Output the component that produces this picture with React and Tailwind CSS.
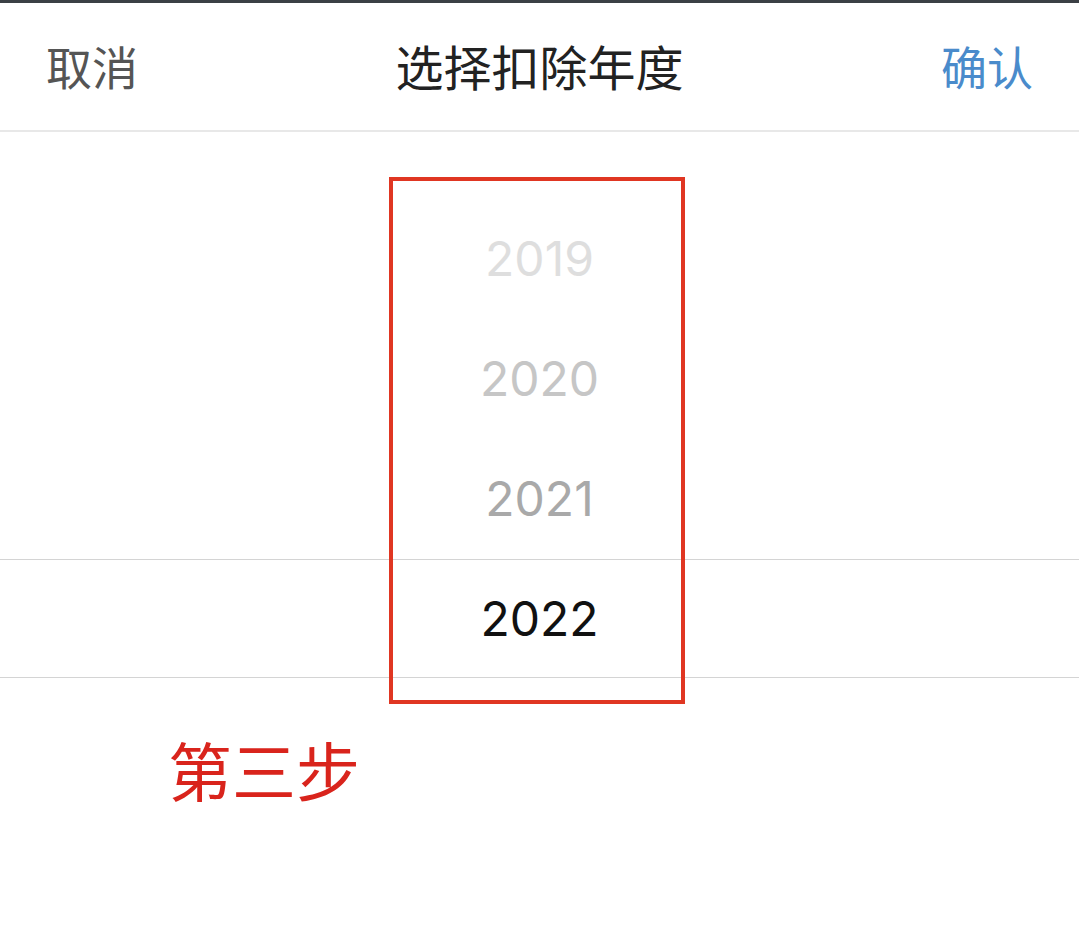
import React from 'react';

const years = [
  { label: '2019', color: 'text-[#dedede]' },
  { label: '2020', color: 'text-[#c6c6c6]' },
  { label: '2021', color: 'text-[#a9a9a9]' },
];

export default function App() {
  return (
    <div className="relative w-[1079px] h-[943px] bg-white overflow-hidden" style={{ fontFamily: '"Noto Sans CJK SC", "Noto Sans", sans-serif' }}>
      <div className="h-[3px] bg-[#3b4045]" />

      {/* header */}
      <div className="h-[129px] flex items-center justify-between px-[46px] pb-[4px] border-b-2 border-[#e8e8e8]">
        <span className="text-[46px] text-[#555555] leading-none">取消</span>
        <span className="text-[48px] text-[#222222] leading-none">选择扣除年度</span>
        <span className="text-[46px] text-[#4a8bcb] leading-none">确认</span>
      </div>

      {/* picker */}
      <div className="pt-[67px]" style={{ fontFamily: 'Inter, Roboto, sans-serif' }}>
        {years.map((y) => (
          <div key={y.label} className={`h-[120px] flex items-center justify-center text-[48px] ${y.color}`}>
            {y.label}
          </div>
        ))}
        <div className="h-[119px] flex items-center justify-center text-[48px] text-[#111111] border-y border-[#d4d4d4]">
          2022
        </div>
      </div>

      <div className="pl-[168px] pt-[58px] text-[64px] leading-none text-[#d9241c]">第三步</div>

      {/* annotation box */}
      <div className="absolute left-[389px] top-[177px] w-[296px] h-[527px] border-4 border-[#e03622]" />
    </div>
  );
}
